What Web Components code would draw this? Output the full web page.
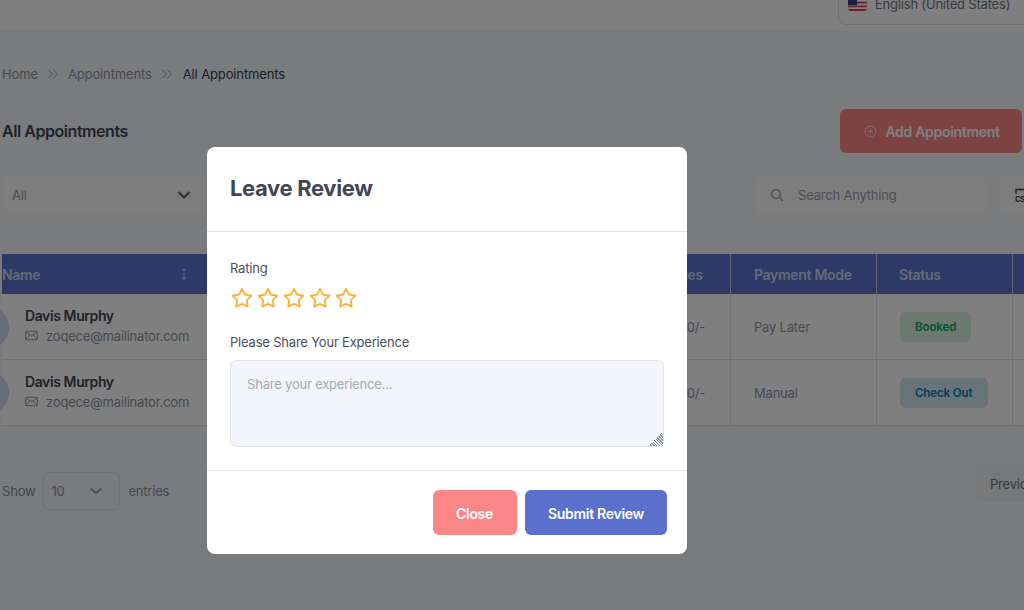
<!DOCTYPE html>
<html lang="en">
<head>
<meta charset="utf-8">
<title>All Appointments</title>
<style>
html,body{margin:0;padding:0;height:100%}
body{font-family:Inter,"Liberation Sans",sans-serif;overflow:hidden;background:#f4f6f9}
</style>
</head>
<body>
<app-screen></app-screen>
<script>
const shared = `*{box-sizing:border-box}svg{display:block;flex:none}`;
function def(name, css, html){
  customElements.define(name, class extends HTMLElement{
    constructor(){super();const r=this.attachShadow({mode:'open'});
      r.innerHTML=`<style>${shared}${css}</style>${typeof html==='function'?html(this):html}`;}
  });
}
const chev=`<svg width="16" height="16" viewBox="0 0 16 16" fill="none" stroke="currentColor" stroke-width="2" stroke-linecap="round" stroke-linejoin="round"><path d="M3 5.500l5 5 5-5"/></svg>`;
const chevThin=`<svg width="14" height="14" viewBox="0 0 16 16" fill="none" stroke="currentColor" stroke-width="1.800" stroke-linecap="round" stroke-linejoin="round"><path d="M2.500 5.500l5.500 5 5.500-5"/></svg>`;
const dbl=`<svg width="12" height="14" viewBox="0 0 12 14" fill="none" stroke="currentColor" stroke-width="1"><path d="M1 2.500L5.500 7 1 11.500M6 2.500L10.500 7 6 11.500"/></svg>`;
const mail=`<svg width="13" height="13" viewBox="0 0 16 16" fill="none" stroke="currentColor" stroke-width="1.200"><rect x=".8" y="2.800" width="14.400" height="10.400" rx="1.500"/><path d="M1 3.500l7 5 7-5M1 12.500l5-5.300M15 12.500l-5-5.300"/></svg>`;

def('top-bar',`:host{display:flex;justify-content:flex-end;height:30px;background:#fff;overflow:hidden}
.lang{display:flex;align-items:center;gap:8px;width:240px;height:44px;margin:-19px -54px 0 0;padding:2px 9px 0;border:1px solid #dfe3ec;border-radius:8px;font-size:13px;color:#6f7585;background:#fff;flex:none}
svg{border-radius:3px}`,
`<div class="lang"><svg width="19" height="13" viewBox="0 0 19 13"><rect width="19" height="13" fill="#fff"/><path d="M0 0h19v1.900H0zM0 3.700h19v1.900H0zM0 7.400h19v1.900H0zM0 11.100h19V13H0z" fill="#d8424f"/><rect width="9" height="7" fill="#3c3f8f"/></svg><span>English (United States)</span></div>`);

def('bread-crumbs',`:host{display:flex;align-items:center;gap:9px;height:20px;letter-spacing:-.13px}
span{color:#8d93a3}.cur{color:#3a3f51;margin-left:1px}svg{color:#9aa0ae}`,
`<span>Home</span>${dbl}<span>Appointments</span>${dbl}<span class="cur">All Appointments</span>`);

def('page-head',`:host{display:flex;justify-content:space-between;align-items:center;height:44px}
h1{margin:0;font-size:16px;letter-spacing:-.45px;font-weight:600;color:#41465a}
button{all:unset;box-sizing:border-box;display:flex;align-items:center;justify-content:center;gap:8px;width:182px;height:44px;padding-left:2px;background:#fb8787;border-radius:6px;color:#fff;letter-spacing:-.3px;font:600 14px Inter,"Liberation Sans",sans-serif}
svg{opacity:.8}`,
`<h1>All Appointments</h1><button><svg width="13" height="13" viewBox="0 0 14 14" fill="none" stroke="currentColor"><circle cx="7" cy="7" r="5.800"/><path d="M7 4.500v5M4.500 7h5"/></svg>Add Appointment</button>`);

def('filter-bar',`:host{display:flex;align-items:center;height:37px}
.sel,.search,.csv{background:#fbfbfd;border-radius:6px;height:37px;display:flex;align-items:center;color:#9aa0ae}
.sel{width:204px;padding:0 14px 1px 10px;justify-content:space-between}
.sel svg{color:#555b6b}
.grow{flex:1}
.search{width:231px;padding:0 15px 1px;gap:14px;flex:none}
.search svg{color:#8d93a3}
.csv{width:60px;margin:0 -39px 0 15px;padding-left:14px;flex:none;color:#3a3f51}`,
`<div class="sel"><span>All</span>${chev}</div><div class="grow"></div>
<div class="search"><svg width="14" height="14" viewBox="0 0 14 14" fill="none" stroke="currentColor" stroke-width="1.300" stroke-linecap="round"><circle cx="6" cy="6" r="4.300"/><path d="M9.300 9.300L12.500 12.500"/></svg><span>Search Anything</span></div>
<div class="csv"><svg width="14" height="16" viewBox="0 0 14 16" fill="none" stroke="currentColor" stroke-width="1.300"><path d="M1 6V1.500h12"/><text x="0" y="14" font-size="7.500" font-weight="700" fill="currentColor" stroke="none" font-family="Inter,sans-serif">CSV</text></svg></div>`);

def('table-row',`:host{display:grid;grid-template-columns:240px 489px 146px 136px 120px;height:66px;background:#fff;border-bottom:1px solid #dfe3ec;color:#8d93a3}
.c{display:flex;align-items:center;border-right:1px solid #dfe3ec;padding-left:23px}
.name{padding-left:0;overflow:visible;gap:16px;margin-left:-37px;width:277px}
.av{width:44px;height:44px;border-radius:50%;background:#d0d6f0;flex:none}
.tx{padding-bottom:2px}
b{display:block;font-weight:600;font-size:14px;letter-spacing:-.4px;color:#41465a;margin-bottom:2px;line-height:18px}
.em{display:flex;align-items:center;gap:8px;line-height:18px}
.fee{justify-content:flex-end;padding-right:25px}
.last{border-right:0}
.badge{display:inline-block;height:30px;line-height:30px;padding:0 15px;border-radius:5px;font-size:11.500px;letter-spacing:-.1px;font-weight:600}`,
el=>{const green=el.getAttribute('status')==='Booked';return `<div class="c name"><div class="av"></div><div class="tx"><b>Davis Murphy</b><div class="em">${mail}<span>zoqece@mailinator.com</span></div></div></div>
<div class="c fee"><span>${el.getAttribute('fee')}</span></div>
<div class="c"><span>${el.getAttribute('mode')}</span></div>
<div class="c"><span class="badge" style="${green?'background:#d8f2e2;color:#1f9a55':'background:#cfe9f5;color:#0a7ba8'}">${el.getAttribute('status')}</span></div>
<div class="c last"></div>`});

def('data-table',`:host{display:block;width:1131px}
.head{display:grid;grid-template-columns:240px 489px 146px 136px 120px;height:40px;background:#5a72ce;color:#ccd3ee;font-size:14px;letter-spacing:-.3px;font-weight:600}
.head div{display:flex;align-items:center;padding-left:23px;border-right:1px solid #c9d0ea}
.head .n{padding-left:0;justify-content:space-between;padding-right:53px}
.head .r{justify-content:flex-end;padding-right:27px}
.head div:last-child{border-right:0}`,
`<div class="head"><div class="n"><span>Name</span><svg width="8" height="14" viewBox="0 0 8 14" fill="none" stroke="#aab4dc" stroke-width="1.200"><path d="M4 1.500v11M2 3.500l2-2 2 2M2 10.500l2 2 2-2"/></svg></div><div class="r"><span>Charges</span></div><div>Payment Mode</div><div style="padding-left:22px">Status</div><div></div></div>
<slot></slot>`);

def('table-foot',`:host{display:flex;justify-content:space-between;align-items:flex-start;color:#8d93a3;height:46px}
.l{display:flex;align-items:center;gap:8px;margin-top:8px}
.sel{display:flex;align-items:center;justify-content:space-between;width:77px;height:38px;padding:0 16px 0 7px;border:1px solid #e1e4ec;border-radius:6px;color:#8d93a3}
.prev{width:60px;flex:none;height:38px;background:#eef0f4;border-radius:6px;padding-left:14px;line-height:40px;color:#6f7585;white-space:nowrap;overflow:hidden;margin-right:-14px}`,
`<div class="l"><span>Show</span><div class="sel"><span>10</span>${chevThin}</div><span>entries</span></div><div class="prev">Previous</div>`);

def('review-modal',`:host{display:block;position:absolute;inset:0;background:rgba(0,0,0,.5);padding:147px 0 0 207px}
.m{width:480px;height:407px;background:#fff;border-radius:8px;display:flex;flex-direction:column;color:#4a4f60}
header{height:85px;flex:none;display:flex;align-items:center;padding:0 23px;border-bottom:1px solid #dfe3ee}
h2{margin:0;font-size:22px;letter-spacing:-.35px;font-weight:700;color:#434656;position:relative;top:-1px}
main{flex:1;padding:27px 23px 0}
label{display:block;line-height:18px}
.stars{display:flex;gap:2px;margin:9px 0 23px 0}
textarea{display:block;width:434px;height:87px;margin-top:9px;padding:15px 16px;background:#f4f5fa;border:1px solid #dfe3ee;border-radius:6px;font:13px Inter,"Liberation Sans",sans-serif;letter-spacing:-.2px;resize:vertical;outline:0;color:#4a4f60}
textarea::placeholder{color:#a5aab8;opacity:1}
textarea::-webkit-resizer{background:linear-gradient(135deg,#f4f5fa 50%,transparent 50%),repeating-linear-gradient(45deg,#8f93a0 0 1px,#f4f5fa 1px 2px)}
footer{height:84px;flex:none;border-top:1px solid #dfe3ee;display:flex;justify-content:flex-end;gap:8px;padding:19px 20px 0 0}
button{all:unset;box-sizing:border-box;height:45px;padding-top:1px;display:flex;align-items:center;justify-content:center;border-radius:6px;color:#fff;letter-spacing:-.3px;font:600 14px Inter,"Liberation Sans",sans-serif}
.c{width:84px;padding-right:1px;background:#fb8787}.s{width:142px;background:#5a72ce}`,
()=>{const star=`<svg width="24" height="24" viewBox="0 0 24 24" fill="none" stroke="#ffad26" stroke-width="1.700" stroke-linejoin="round"><path d="M12 2.800l2.900 5.900 6.500.95-4.700 4.600 1.100 6.500L12 17.700l-5.800 3.050 1.100-6.500-4.700-4.600 6.500-.95z"/></svg>`;
return `<div class="m"><header><h2>Leave Review</h2></header><main><label>Rating</label><div class="stars">${star.repeat(5)}</div><label>Please Share Your Experience</label><textarea placeholder="Share your experience..."></textarea></main><footer><button class="c">Close</button><button class="s">Submit Review</button></footer></div>`});

def('app-screen',`:host{display:block;position:relative;width:1024px;height:610px;overflow:hidden;background:#f4f6f9;font-size:13px;letter-spacing:-.2px}
.w{padding:0 2px}
bread-crumbs{margin-top:34px}
page-head{margin-top:25px}
filter-bar{margin-top:24px}
data-table{margin-top:40px}
table-foot{margin-top:38px}`,
`<top-bar></top-bar><div class="w"><bread-crumbs></bread-crumbs><page-head></page-head><filter-bar></filter-bar>
<data-table><table-row fee="100/-" mode="Pay Later" status="Booked"></table-row><table-row fee="100/-" mode="Manual" status="Check Out"></table-row></data-table>
<table-foot></table-foot></div><review-modal></review-modal>`);
</script>
</body>
</html>
